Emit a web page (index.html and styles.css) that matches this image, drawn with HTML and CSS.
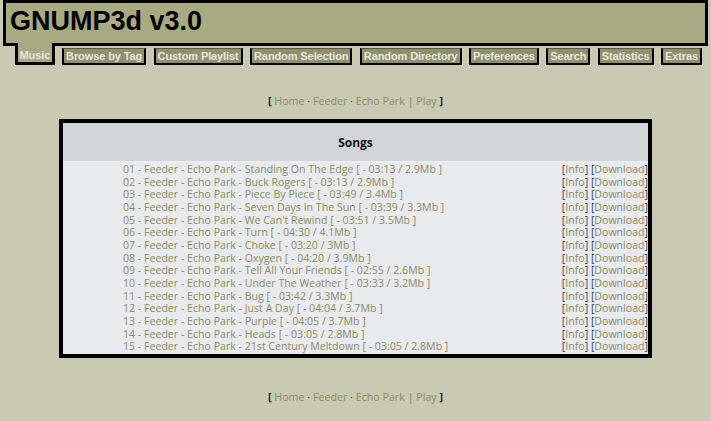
FILE: index.html
```html
<!DOCTYPE html>
<html>
<head>
<meta charset="utf-8">
<link rel="stylesheet" href="styles.css">
</head>
<body>
<div class="header"><h1 class="title">GNUMP3d v3.0</h1></div>
<nav class="tabs">
  <a class="tab active">Music</a>
  <a class="tab">Browse by Tag</a>
  <a class="tab">Custom Playlist</a>
  <a class="tab">Random Selection</a>
  <a class="tab">Random Directory</a>
  <a class="tab">Preferences</a>
  <a class="tab">Search</a>
  <a class="tab">Statistics</a>
  <a class="tab">Extras</a>
</nav>
<p class="crumbs"><span class="br">[</span> <a>Home</a> <span class="dot">·</span> <a>Feeder</a> <span class="dot">·</span> <a>Echo Park</a> <span class="sep">|</span> <a>Play</a> <span class="br">]</span></p>
<div class="songs">
  <div class="songs-head">Songs</div>
  <div class="songs-body">
    <div class="row"><a class="song">01 - Feeder - Echo Park - Standing On The Edge [ - 03:13 / 2.9Mb ]</a><span class="acts"><span class="b">[</span><a>Info</a><span class="b">]</span> <span class="b">[</span><a>Download</a><span class="b">]</span></span></div>
    <div class="row"><a class="song">02 - Feeder - Echo Park - Buck Rogers [ - 03:13 / 2.9Mb ]</a><span class="acts"><span class="b">[</span><a>Info</a><span class="b">]</span> <span class="b">[</span><a>Download</a><span class="b">]</span></span></div>
    <div class="row"><a class="song">03 - Feeder - Echo Park - Piece By Piece [ - 03:49 / 3.4Mb ]</a><span class="acts"><span class="b">[</span><a>Info</a><span class="b">]</span> <span class="b">[</span><a>Download</a><span class="b">]</span></span></div>
    <div class="row"><a class="song">04 - Feeder - Echo Park - Seven Days In The Sun [ - 03:39 / 3.3Mb ]</a><span class="acts"><span class="b">[</span><a>Info</a><span class="b">]</span> <span class="b">[</span><a>Download</a><span class="b">]</span></span></div>
    <div class="row"><a class="song">05 - Feeder - Echo Park - We Can't Rewind [ - 03:51 / 3.5Mb ]</a><span class="acts"><span class="b">[</span><a>Info</a><span class="b">]</span> <span class="b">[</span><a>Download</a><span class="b">]</span></span></div>
    <div class="row"><a class="song">06 - Feeder - Echo Park - Turn [ - 04:30 / 4.1Mb ]</a><span class="acts"><span class="b">[</span><a>Info</a><span class="b">]</span> <span class="b">[</span><a>Download</a><span class="b">]</span></span></div>
    <div class="row"><a class="song">07 - Feeder - Echo Park - Choke [ - 03:20 / 3Mb ]</a><span class="acts"><span class="b">[</span><a>Info</a><span class="b">]</span> <span class="b">[</span><a>Download</a><span class="b">]</span></span></div>
    <div class="row"><a class="song">08 - Feeder - Echo Park - Oxygen [ - 04:20 / 3.9Mb ]</a><span class="acts"><span class="b">[</span><a>Info</a><span class="b">]</span> <span class="b">[</span><a>Download</a><span class="b">]</span></span></div>
    <div class="row"><a class="song">09 - Feeder - Echo Park - Tell All Your Friends [ - 02:55 / 2.6Mb ]</a><span class="acts"><span class="b">[</span><a>Info</a><span class="b">]</span> <span class="b">[</span><a>Download</a><span class="b">]</span></span></div>
    <div class="row"><a class="song">10 - Feeder - Echo Park - Under The Weather [ - 03:33 / 3.2Mb ]</a><span class="acts"><span class="b">[</span><a>Info</a><span class="b">]</span> <span class="b">[</span><a>Download</a><span class="b">]</span></span></div>
    <div class="row"><a class="song">11 - Feeder - Echo Park - Bug [ - 03:42 / 3.3Mb ]</a><span class="acts"><span class="b">[</span><a>Info</a><span class="b">]</span> <span class="b">[</span><a>Download</a><span class="b">]</span></span></div>
    <div class="row"><a class="song">12 - Feeder - Echo Park - Just A Day [ - 04:04 / 3.7Mb ]</a><span class="acts"><span class="b">[</span><a>Info</a><span class="b">]</span> <span class="b">[</span><a>Download</a><span class="b">]</span></span></div>
    <div class="row"><a class="song">13 - Feeder - Echo Park - Purple [ - 04:05 / 3.7Mb ]</a><span class="acts"><span class="b">[</span><a>Info</a><span class="b">]</span> <span class="b">[</span><a>Download</a><span class="b">]</span></span></div>
    <div class="row"><a class="song">14 - Feeder - Echo Park - Heads [ - 03:05 / 2.8Mb ]</a><span class="acts"><span class="b">[</span><a>Info</a><span class="b">]</span> <span class="b">[</span><a>Download</a><span class="b">]</span></span></div>
    <div class="row"><a class="song">15 - Feeder - Echo Park - 21st Century Meltdown [ - 03:05 / 2.8Mb ]</a><span class="acts"><span class="b">[</span><a>Info</a><span class="b">]</span> <span class="b">[</span><a>Download</a><span class="b">]</span></span></div>
  </div>
</div>
<p class="crumbs bottom"><span class="br">[</span> <a>Home</a> <span class="dot">·</span> <a>Feeder</a> <span class="dot">·</span> <a>Echo Park</a> <span class="sep">|</span> <a>Play</a> <span class="br">]</span></p>
</body>
</html>
```

FILE: styles.css
```css
html, body {
  margin: 0;
  padding: 0;
}
body {
  background: #c9cab1;
  font-family: "Open Sans", sans-serif;
  width: 711px;
  height: 421px;
  overflow: hidden;
}
.header {
  margin: 0 3px;
  height: 40px;
  background: #a8aa82;
  border: 3px solid #000;
}
.title {
  margin: 0;
  padding: 3px 0 0 4px;
  font-family: "Liberation Sans", Arial, sans-serif;
  font-weight: bold;
  font-size: 27px;
  line-height: 30px;
  color: #000;
}
.tabs {
  display: flex;
  gap: 7.4px;
  margin-top: -3px;
  padding-left: 15px;
  position: relative;
}
.tab {
  font-family: "Liberation Sans", Arial, sans-serif;
  font-weight: bold;
  font-size: 11px;
  line-height: 14px;
  color: #e8e8da;
  background: #8f9070;
  border: 2px solid #000;
  border-top: 1px solid #5a5a44;
  padding: 0 2px;
  margin-top: 5px;
  letter-spacing: -0.1px;
}
.tab.active {
  background: #a8aa82;
  border: 3px solid #000;
  border-top: 0;
  margin-top: 0;
  padding: 5px 1.5px 0 1.5px;
  color: #e6e6de;
}
.crumbs {
  margin: 29px 0 0;
  text-align: center;
  font-size: 10.7px;
  line-height: 14px;
  color: #8c8c5e;
}
.crumbs a { color: #8c8c5e; }
.crumbs .br { color: #22261c; font-weight: bold; }
.crumbs .dot { color: #444; }
.crumbs .sep { color: #777; }
.songs {
  margin: 11px 0 0 59px;
  width: 585px;
  border: 4px solid #000;
  background: #e8eaee;
}
.songs-head {
  height: 38px;
  background: #d2d5d8;
  text-align: center;
  font-weight: bold;
  font-size: 12px;
  line-height: 40px;
  color: #111;
  border-bottom: 1px solid #eef0f2;
}
.songs-body {
  padding: 1px 0 1px 60px;
}
.row {
  display: flex;
  justify-content: space-between;
  font-size: 10.6px;
  line-height: 12.65px;
  white-space: nowrap;
}
.song { color: #8c8c5e; }
.acts { color: #8c8c5e; }
.acts .b { color: #2e3e5e; }
.bottom {
  margin-top: 32px;
}
```
